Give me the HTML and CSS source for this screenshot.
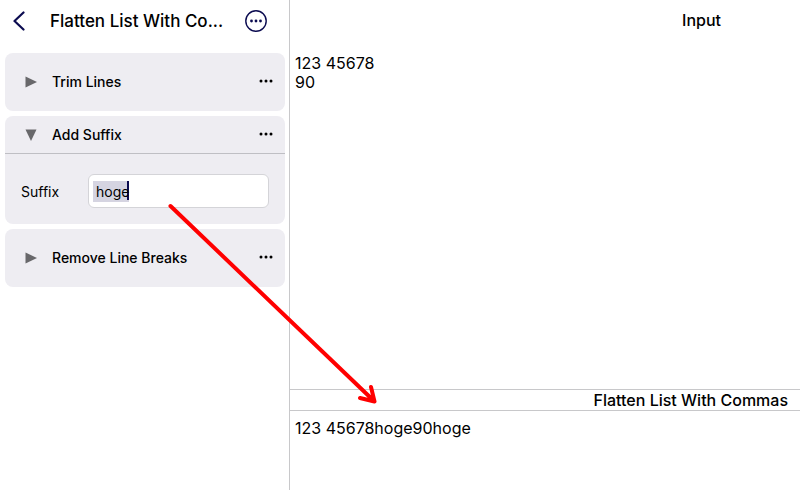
FILE: index.html
```html
<!DOCTYPE html>
<html lang="en">
<head>
<meta charset="utf-8">
<title>Flatten List With Commas</title>
<link rel="stylesheet" href="styles.css">
</head>
<body>
<div class="app">
  <aside class="sidebar">
    <header class="topbar">
      <button class="icon-button" aria-label="Back">
        <svg width="14" height="20" viewBox="0 0 14 20"><path class="line thick" d="M11.500 1.500 2.500 10 11.500 18.500"/></svg>
      </button>
      <h1 class="title">Flatten List With Co...</h1>
      <button class="icon-button" aria-label="Options">
        <svg width="24" height="24" viewBox="0 0 24 24"><circle class="line" cx="12" cy="12" r="10.200"/><g class="navy"><circle cx="7.500" cy="12" r="1.400"/><circle cx="12" cy="12" r="1.400"/><circle cx="16.500" cy="12" r="1.400"/></g></svg>
      </button>
    </header>
    <main class="steps">
      <section class="card">
        <div class="card-head">
          <button class="icon-button" aria-label="Expand Trim Lines"><svg width="12" height="12" viewBox="0 0 12 12"><path class="triangle" d="M.5.5 12 6 .5 11.500Z"/></svg></button>
          <h2 class="card-title">Trim Lines</h2>
          <button class="icon-button" aria-label="Trim Lines options"><svg width="14" height="6" viewBox="0 0 14 6"><circle cx="2" cy="2" r="1.500"/><circle cx="7" cy="2" r="1.500"/><circle cx="12" cy="2" r="1.500"/></svg></button>
        </div>
      </section>
      <section class="card">
        <div class="card-head open">
          <button class="icon-button" aria-label="Collapse Add Suffix"><svg width="12" height="12" viewBox="0 0 12 12"><path class="triangle" d="M.5.5h11L6 12Z"/></svg></button>
          <h2 class="card-title">Add Suffix</h2>
          <button class="icon-button" aria-label="Add Suffix options"><svg width="14" height="6" viewBox="0 0 14 6"><circle cx="2" cy="2" r="1.500"/><circle cx="7" cy="2" r="1.500"/><circle cx="12" cy="2" r="1.500"/></svg></button>
        </div>
        <div class="field">
          <label class="label" for="suffix">Suffix</label>
          <input class="text-input" id="suffix" type="text" value="hoge">
        </div>
      </section>
      <section class="card">
        <div class="card-head">
          <button class="icon-button" aria-label="Expand Remove Line Breaks"><svg width="12" height="12" viewBox="0 0 12 12"><path class="triangle" d="M.5.5 12 6 .5 11.500Z"/></svg></button>
          <h2 class="card-title">Remove Line Breaks</h2>
          <button class="icon-button" aria-label="Remove Line Breaks options"><svg width="14" height="6" viewBox="0 0 14 6"><circle cx="2" cy="2" r="1.500"/><circle cx="7" cy="2" r="1.500"/><circle cx="12" cy="2" r="1.500"/></svg></button>
        </div>
      </section>
    </main>
  </aside>
  <div class="content">
    <section class="pane input-pane">
      <h2 class="pane-title input-title"><label for="source">Input</label></h2>
      <textarea class="editor" id="source" spellcheck="false">123 45678
90</textarea>
    </section>
    <section class="pane output-pane">
      <h2 class="pane-title output-title"><label for="result">Flatten List With Commas</label></h2>
      <textarea class="editor" id="result" readonly spellcheck="false">123 45678hoge90hoge</textarea>
    </section>
  </div>
  <svg class="arrow" width="212" height="206" viewBox="166 200 212 206" aria-hidden="true"><path d="M170.500 206 374 401M371 387l3.500 14.500L360 398"/></svg>
</div>
</body>
</html>
```
FILE: styles.css
```css
* {
  box-sizing: border-box;
}

body {
  margin: 0;
  background: #fff;
  color: #000;
  font-family: Inter, "Liberation Sans", sans-serif;
}

h1, h2 {
  margin: 0;
  font-weight: 500;
}

.app {
  position: relative;
  display: flex;
  min-height: 100vh;
}

.sidebar {
  flex: 0 0 290px;
  min-width: 0;
  border-right: 1px solid #c8c8ca;
}

.topbar {
  display: flex;
  align-items: center;
  height: 41px;
  padding: 0 21px 0 12px;
}

.title {
  flex: 1;
  min-width: 0;
  margin-left: 24px;
  font-size: 17px;
  line-height: 20px;
  white-space: nowrap;
}

.icon-button {
  display: flex;
  padding: 0;
  border: 0;
  background: none;
}

.line {
  fill: none;
  stroke: #0b0b50;
  stroke-width: 1.4;
  stroke-linecap: round;
  stroke-linejoin: round;
}

.thick {
  stroke-width: 2.2;
}

.navy {
  fill: #0b0b50;
}

.triangle {
  fill: #68686b;
}

.steps {
  display: flex;
  flex-direction: column;
  gap: 5px;
  padding: 12px 4px 0 5px;
}

.card {
  border-radius: 8px;
  background: #eeedf2;
}

.card-head {
  display: flex;
  align-items: center;
  height: 58px;
  padding: 0 12px 0 20px;
}

.card-head.open {
  height: 38px;
  border-bottom: 1px solid #bfbfc4;
}

.card-title {
  flex: 1;
  margin-left: 15px;
  font-size: 14px;
  line-height: 20px;
}

.field {
  display: flex;
  align-items: center;
  padding: 20px 16px 16px;
}

.label {
  flex: 0 0 67px;
  font-size: 14px;
}

.text-input {
  flex: 1;
  width: 100%;
  min-width: 0;
  height: 34px;
  padding: 0 7px;
  border: 1px solid #d4d4d8;
  border-radius: 6px;
  outline: 0;
  /* Caret and selection tint behind the value */
  background:
    linear-gradient(#0b0b50, #0b0b50) 38px 6px / 2px 19px no-repeat,
    linear-gradient(#d5d4e1, #d5d4e1) 4px 6px / 36px 21px no-repeat,
    #fff;
  color: #000;
  font: 14px Inter, "Liberation Sans", sans-serif;
}

.content {
  display: flex;
  flex: 1;
  flex-direction: column;
  min-width: 0;
}

.pane {
  display: flex;
  flex-direction: column;
}

.input-pane {
  flex: 1;
}

.output-pane {
  flex: 0 0 101px;
}

.pane-title {
  font-size: 16px;
  line-height: 20px;
  text-align: right;
}

.input-title {
  padding: 10px 79px 11px 0;
}

.output-title {
  padding-right: 12px;
  border-top: 1px solid #c8c8ca;
  border-bottom: 1px solid #c8c8ca;
}

.editor {
  flex: 1;
  width: 100%;
  padding: 13px 5px 0;
  border: 0;
  outline: 0;
  resize: none;
  background: none;
  color: #000;
  font: 16px/19px Inter, "Liberation Sans", sans-serif;
}

.output-pane .editor {
  padding-top: 8px;
}

.arrow {
  position: absolute;
  top: 200px;
  left: 166px;
  fill: none;
  stroke: #f00;
  stroke-width: 4;
  stroke-linecap: round;
  stroke-linejoin: round;
  pointer-events: none;
}
```
